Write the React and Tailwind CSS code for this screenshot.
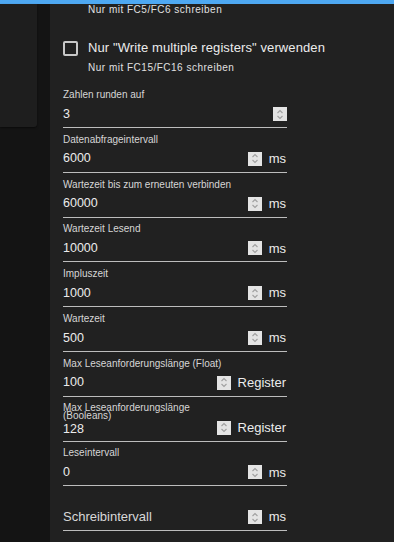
import React from 'react';

const fields = [
  { label: 'Zahlen runden auf', value: '3' },
  { label: 'Datenabfrageintervall', value: '6000', unit: 'ms' },
  { label: 'Wartezeit bis zum erneuten verbinden', value: '60000', unit: 'ms' },
  { label: 'Wartezeit Lesend', value: '10000', unit: 'ms' },
  { label: 'Impluszeit', value: '1000', unit: 'ms' },
  { label: 'Wartezeit', value: '500', unit: 'ms' },
  { label: 'Max Leseanforderungslänge (Float)', value: '100', unit: 'Register' },
  { label: 'Max Leseanforderungslänge (Booleans)', value: '128', unit: 'Register', narrow: true },
  { label: 'Leseintervall', value: '0', unit: 'ms' },
  { label: '', value: '', placeholder: 'Schreibintervall', unit: 'ms' },
];

function Spinner() {
  return (
    <div className="w-[14px] h-[14px] bg-[#e4e4e4] flex items-center justify-center shrink-0">
      <svg width="8" height="11" viewBox="0 0 8 11" fill="none" stroke="#a0a0a0" strokeWidth="1.1">
        <path d="M1.5 4 L4 1.5 L6.5 4" />
        <path d="M1.5 7 L4 9.5 L6.5 7" />
      </svg>
    </div>
  );
}

function Field({ label, value, unit, placeholder, narrow }) {
  return (
    <div className="w-[224px] flex flex-col">
      <div className="h-[12px] pt-[1px] relative z-10">
        <div className={`text-[10px] text-[#d6d6d6] ${narrow ? 'w-[130px] leading-[8.5px]' : 'leading-[10px]'}`}>{label}</div>
      </div>
      <div className="h-[27px] flex items-center border-b border-[#bdbdbd]">
        <div className={`flex-1 ${placeholder ? 'text-[13px] text-[#d8d8d8]' : 'text-[12.5px] text-[#ececec]'} ${narrow ? 'leading-[12px] pt-[2px]' : ''}`}>
          {value || placeholder}
        </div>
        <Spinner />
        {unit && <div className="ml-[7px] mr-[1px] text-[13px] text-[#ececec]">{unit}</div>}
      </div>
    </div>
  );
}

export default function App() {
  return (
    <div className="w-[394px] h-[542px] overflow-hidden flex flex-col bg-[#141414]" style={{ fontFamily: '"Liberation Sans", Arial, sans-serif' }}>
      <div className="h-[4px] bg-[#4ea8f2] shrink-0" />
      <div className="flex flex-1">
        <div className="w-[37px] shrink-0">
          <div className="h-[123px] bg-[#1e1e1e] rounded-br-[3px] shadow-[0_1px_2px_rgba(0,0,0,0.5)]" />
        </div>
        <div className="w-[13px] shrink-0" />
        <div className="flex-1 bg-[#212121] pl-[13px]">
          <div className="h-[12px] pl-[25px] text-[10px] leading-[12px] tracking-[0.5px] text-[#e0e0e0]">
            Nur mit FC5/FC6 schreiben
          </div>
          <div className="mt-[22px] h-[20px] flex items-center">
            <div className="w-[15px] h-[15px] border-2 border-[#c8c8c8] rounded-[2px]" />
            <div className="ml-[10px] text-[13px] tracking-[0.1px] text-[#ececec]">Nur "Write multiple registers" verwenden</div>
          </div>
          <div className="mt-[4px] h-[12px] pl-[25px] text-[10px] leading-[12px] tracking-[0.5px] text-[#e0e0e0]">
            Nur mit FC15/FC16 schreiben
          </div>
          <div className="mt-[15px] flex flex-col gap-[5.8px]">
            {fields.map((f, i) => (
              <Field key={i} {...f} />
            ))}
          </div>
        </div>
      </div>
    </div>
  );
}
